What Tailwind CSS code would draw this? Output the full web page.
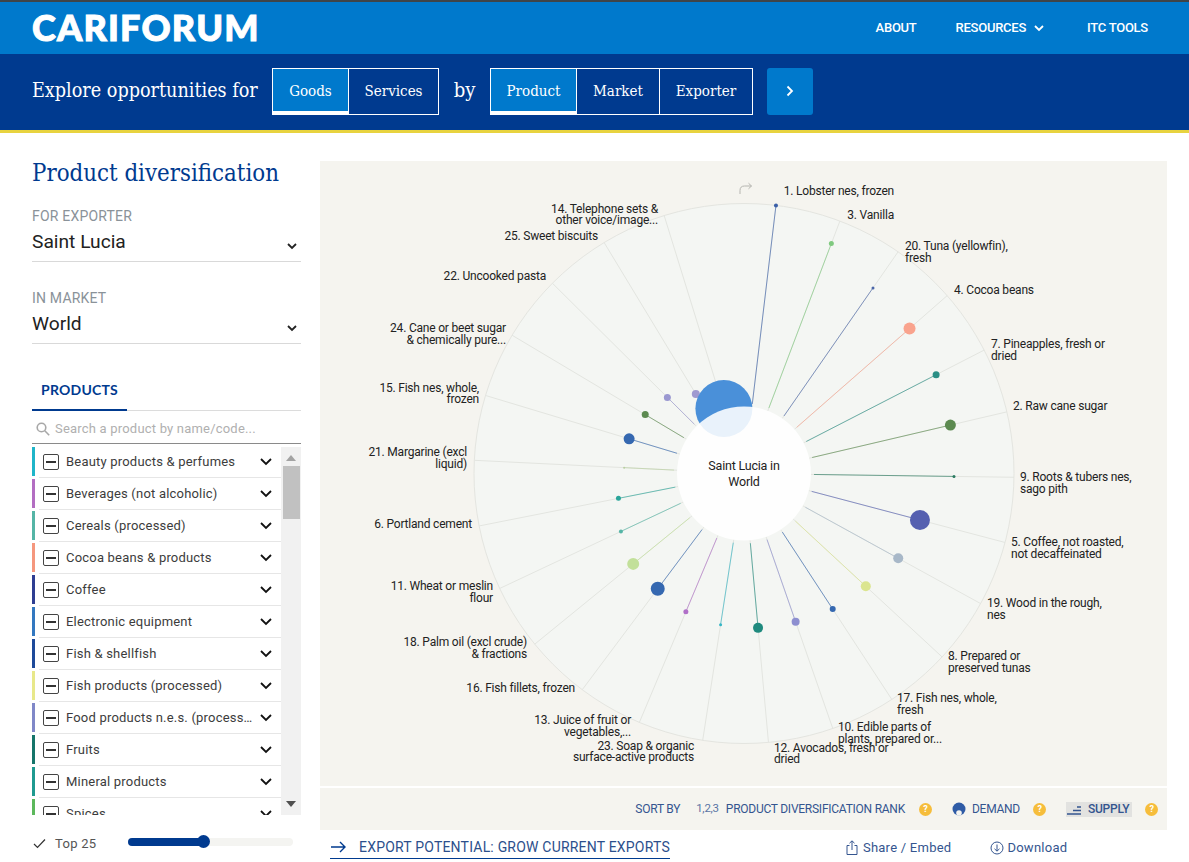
<!DOCTYPE html>
<html lang="en">
  <head>
    <meta charset="UTF-8" />
    <title>CARIFORUM - Product diversification</title>
    <script src="https://cdn.jsdelivr.net/npm/@tailwindcss/browser@4"></script>
  </head>
  <body class="h-[862px] overflow-hidden bg-white font-['Roboto',sans-serif] text-[#333]">
    <!-- top bar -->
    <header class="h-[54px] border-t-2 border-[#3f4448] bg-[#0079cc] flex items-center justify-between pl-8 pr-[41px]">
      <div class="font-['Lato',sans-serif] font-black text-[36px] leading-none text-white tracking-[1.2px] [-webkit-text-stroke:1px_white] -mt-[2px]">CARIFORUM</div>
      <nav class="flex items-center text-[13px] text-white font-medium tracking-[-0.25px]">
        <a class="mr-[39px]">ABOUT</a>
        <a class="flex items-center gap-2 mr-[43px]">RESOURCES
          <svg class="w-[10px] h-[7px]" viewBox="0 0 10 7" fill="none" stroke="white" stroke-width="1.8"><path d="M1 1l4 4 4-4" /></svg>
        </a>
        <a>ITC TOOLS</a>
      </nav>
    </header>

    <!-- explore bar -->
    <div class="h-[76px] bg-[#003a8f] flex items-center pb-[2px] pl-8 text-white font-['DejaVu_Serif_Condensed','DejaVu_Serif',serif]">
      <span class="text-[19.6px] w-[240px]">Explore opportunities for</span>
      <div class="flex h-[47px] border border-white text-[15px]">
        <button class="w-[75px] pt-[3px] bg-[#0079cc] border-b-[3px] border-white">Goods</button>
        <button class="w-[90px] border-l border-white">Services</button>
      </div>
      <span class="text-[20px] w-[51px] text-center -mt-[2px]">by</span>
      <div class="flex h-[47px] border border-white text-[15px]">
        <button class="w-[85px] pt-[3px] bg-[#0079cc] border-b-[3px] border-white">Product</button>
        <button class="w-[83px] border-l border-white">Market</button>
        <button class="w-[93px] border-l border-white">Exporter</button>
      </div>
      <button class="ml-[14px] w-[46px] h-[47px] bg-[#0079cc] rounded-[3px] flex items-center justify-center">
        <svg class="w-[8px] h-[12px]" viewBox="0 0 8 12" fill="none" stroke="white" stroke-width="1.8"><path d="M1.5 1.5l4.5 4.5-4.5 4.5" /></svg>
      </button>
    </div>
    <div class="h-[3px] bg-[#e8d33f]"></div>

    <div class="flex">
      <!-- sidebar -->
      <aside class="w-[269px] ml-8 shrink-0">
        <h1 class="mt-[24px] text-[23.800px] leading-[32px] text-[#003a8f] font-['DejaVu_Serif_Condensed','DejaVu_Serif',serif]">Product diversification</h1>

        <div class="mt-[19px] text-[14px] leading-[16px] tracking-[0.2px] text-[#8a9299]">FOR EXPORTER</div>
        <div class="mt-[3px] h-[35px] border-b border-[#d9d9d9] flex justify-between items-start text-[19.2px] leading-[30px] text-[#222]">
          Saint Lucia
          <svg class="w-[10px] h-[7px] mt-[16px] mr-[4px]" viewBox="0 0 10 7" fill="none" stroke="#222" stroke-width="1.8"><path d="M1 1l4 4 4-4" /></svg>
        </div>
        <div class="mt-[28px] text-[14px] leading-[16px] tracking-[0.2px] text-[#8a9299]">IN MARKET</div>
        <div class="mt-[3px] h-[35px] border-b border-[#d9d9d9] flex justify-between items-start text-[19.2px] leading-[30px] text-[#222]">
          World
          <svg class="w-[10px] h-[7px] mt-[16px] mr-[4px]" viewBox="0 0 10 7" fill="none" stroke="#222" stroke-width="1.8"><path d="M1 1l4 4 4-4" /></svg>
        </div>

        <div class="mt-[29px] h-[38px] border-b border-[#dcdcdc]">
          <div class="w-[95px] h-[38px] border-b-[2px] border-[#003a8f] text-center text-[14px] leading-[34px] font-bold font-['Lato',sans-serif] tracking-[0.2px] text-[#003a8f]">PRODUCTS</div>
        </div>
        <div class="h-[33px] pt-[4px] border-b border-[#8a8a8a] flex items-center pl-[4px] gap-[5px] text-[13px] text-[#b0b0b0] tracking-[0.2px]">
          <svg class="w-[14px] h-[14px]" viewBox="0 0 14 14" fill="none" stroke="#a8a8a8" stroke-width="1.6"><circle cx="5.5" cy="5.5" r="4.3" /><path d="M8.8 8.8l4.4 4.4" /></svg>
          Search a product by name/code...
        </div>

        <!-- product list -->
        <div class="relative mt-[3px] h-[368px] overflow-hidden">
          <div class="w-[249px] text-[13px] text-[#3c3c3c] tracking-[0.2px]">
            <div class="flex h-[32px]"><i class="w-[3px] h-[29px] shrink-0 bg-[#1fb5c9]"></i><div class="ml-[4px] flex-1 min-w-0 flex items-center border-b border-[#e6e6e6] pl-[4px] pr-[9px] h-[31px]"><span class="shrink-0 w-[16px] h-[16px] border border-[#444] rounded-[2px] flex items-center justify-center mr-[7px]"><b class="w-[10px] h-[2px] bg-[#333]"></b></span><span class="flex-1 min-w-0 truncate">Beauty products &amp; perfumes</span><svg class="shrink-0 w-[12px] h-[8px] ml-[5px]" viewBox="0 0 12 8" fill="none" stroke="#111" stroke-width="1.8"><path d="M1 1l5 5 5-5" /></svg></div></div>
            <div class="flex h-[32px]"><i class="w-[3px] h-[29px] shrink-0 bg-[#b36ec2]"></i><div class="ml-[4px] flex-1 min-w-0 flex items-center border-b border-[#e6e6e6] pl-[4px] pr-[9px] h-[31px]"><span class="shrink-0 w-[16px] h-[16px] border border-[#444] rounded-[2px] flex items-center justify-center mr-[7px]"><b class="w-[10px] h-[2px] bg-[#333]"></b></span><span class="flex-1 min-w-0 truncate">Beverages (not alcoholic)</span><svg class="shrink-0 w-[12px] h-[8px] ml-[5px]" viewBox="0 0 12 8" fill="none" stroke="#111" stroke-width="1.8"><path d="M1 1l5 5 5-5" /></svg></div></div>
            <div class="flex h-[32px]"><i class="w-[3px] h-[29px] shrink-0 bg-[#55b5a6]"></i><div class="ml-[4px] flex-1 min-w-0 flex items-center border-b border-[#e6e6e6] pl-[4px] pr-[9px] h-[31px]"><span class="shrink-0 w-[16px] h-[16px] border border-[#444] rounded-[2px] flex items-center justify-center mr-[7px]"><b class="w-[10px] h-[2px] bg-[#333]"></b></span><span class="flex-1 min-w-0 truncate">Cereals (processed)</span><svg class="shrink-0 w-[12px] h-[8px] ml-[5px]" viewBox="0 0 12 8" fill="none" stroke="#111" stroke-width="1.8"><path d="M1 1l5 5 5-5" /></svg></div></div>
            <div class="flex h-[32px]"><i class="w-[3px] h-[29px] shrink-0 bg-[#f5977e]"></i><div class="ml-[4px] flex-1 min-w-0 flex items-center border-b border-[#e6e6e6] pl-[4px] pr-[9px] h-[31px]"><span class="shrink-0 w-[16px] h-[16px] border border-[#444] rounded-[2px] flex items-center justify-center mr-[7px]"><b class="w-[10px] h-[2px] bg-[#333]"></b></span><span class="flex-1 min-w-0 truncate">Cocoa beans &amp; products</span><svg class="shrink-0 w-[12px] h-[8px] ml-[5px]" viewBox="0 0 12 8" fill="none" stroke="#111" stroke-width="1.8"><path d="M1 1l5 5 5-5" /></svg></div></div>
            <div class="flex h-[32px]"><i class="w-[3px] h-[29px] shrink-0 bg-[#2f3e92]"></i><div class="ml-[4px] flex-1 min-w-0 flex items-center border-b border-[#e6e6e6] pl-[4px] pr-[9px] h-[31px]"><span class="shrink-0 w-[16px] h-[16px] border border-[#444] rounded-[2px] flex items-center justify-center mr-[7px]"><b class="w-[10px] h-[2px] bg-[#333]"></b></span><span class="flex-1 min-w-0 truncate">Coffee</span><svg class="shrink-0 w-[12px] h-[8px] ml-[5px]" viewBox="0 0 12 8" fill="none" stroke="#111" stroke-width="1.8"><path d="M1 1l5 5 5-5" /></svg></div></div>
            <div class="flex h-[32px]"><i class="w-[3px] h-[29px] shrink-0 bg-[#3378c0]"></i><div class="ml-[4px] flex-1 min-w-0 flex items-center border-b border-[#e6e6e6] pl-[4px] pr-[9px] h-[31px]"><span class="shrink-0 w-[16px] h-[16px] border border-[#444] rounded-[2px] flex items-center justify-center mr-[7px]"><b class="w-[10px] h-[2px] bg-[#333]"></b></span><span class="flex-1 min-w-0 truncate">Electronic equipment</span><svg class="shrink-0 w-[12px] h-[8px] ml-[5px]" viewBox="0 0 12 8" fill="none" stroke="#111" stroke-width="1.8"><path d="M1 1l5 5 5-5" /></svg></div></div>
            <div class="flex h-[32px]"><i class="w-[3px] h-[29px] shrink-0 bg-[#1e4a9a]"></i><div class="ml-[4px] flex-1 min-w-0 flex items-center border-b border-[#e6e6e6] pl-[4px] pr-[9px] h-[31px]"><span class="shrink-0 w-[16px] h-[16px] border border-[#444] rounded-[2px] flex items-center justify-center mr-[7px]"><b class="w-[10px] h-[2px] bg-[#333]"></b></span><span class="flex-1 min-w-0 truncate">Fish &amp; shellfish</span><svg class="shrink-0 w-[12px] h-[8px] ml-[5px]" viewBox="0 0 12 8" fill="none" stroke="#111" stroke-width="1.8"><path d="M1 1l5 5 5-5" /></svg></div></div>
            <div class="flex h-[32px]"><i class="w-[3px] h-[29px] shrink-0 bg-[#e8e88a]"></i><div class="ml-[4px] flex-1 min-w-0 flex items-center border-b border-[#e6e6e6] pl-[4px] pr-[9px] h-[31px]"><span class="shrink-0 w-[16px] h-[16px] border border-[#444] rounded-[2px] flex items-center justify-center mr-[7px]"><b class="w-[10px] h-[2px] bg-[#333]"></b></span><span class="flex-1 min-w-0 truncate">Fish products (processed)</span><svg class="shrink-0 w-[12px] h-[8px] ml-[5px]" viewBox="0 0 12 8" fill="none" stroke="#111" stroke-width="1.8"><path d="M1 1l5 5 5-5" /></svg></div></div>
            <div class="flex h-[32px]"><i class="w-[3px] h-[29px] shrink-0 bg-[#8088c8]"></i><div class="ml-[4px] flex-1 min-w-0 flex items-center border-b border-[#e6e6e6] pl-[4px] pr-[9px] h-[31px]"><span class="shrink-0 w-[16px] h-[16px] border border-[#444] rounded-[2px] flex items-center justify-center mr-[7px]"><b class="w-[10px] h-[2px] bg-[#333]"></b></span><span class="flex-1 min-w-0 truncate">Food products n.e.s. (processed)</span><svg class="shrink-0 w-[12px] h-[8px] ml-[5px]" viewBox="0 0 12 8" fill="none" stroke="#111" stroke-width="1.8"><path d="M1 1l5 5 5-5" /></svg></div></div>
            <div class="flex h-[32px]"><i class="w-[3px] h-[29px] shrink-0 bg-[#16756a]"></i><div class="ml-[4px] flex-1 min-w-0 flex items-center border-b border-[#e6e6e6] pl-[4px] pr-[9px] h-[31px]"><span class="shrink-0 w-[16px] h-[16px] border border-[#444] rounded-[2px] flex items-center justify-center mr-[7px]"><b class="w-[10px] h-[2px] bg-[#333]"></b></span><span class="flex-1 min-w-0 truncate">Fruits</span><svg class="shrink-0 w-[12px] h-[8px] ml-[5px]" viewBox="0 0 12 8" fill="none" stroke="#111" stroke-width="1.8"><path d="M1 1l5 5 5-5" /></svg></div></div>
            <div class="flex h-[32px]"><i class="w-[3px] h-[29px] shrink-0 bg-[#1f9a90]"></i><div class="ml-[4px] flex-1 min-w-0 flex items-center border-b border-[#e6e6e6] pl-[4px] pr-[9px] h-[31px]"><span class="shrink-0 w-[16px] h-[16px] border border-[#444] rounded-[2px] flex items-center justify-center mr-[7px]"><b class="w-[10px] h-[2px] bg-[#333]"></b></span><span class="flex-1 min-w-0 truncate">Mineral products</span><svg class="shrink-0 w-[12px] h-[8px] ml-[5px]" viewBox="0 0 12 8" fill="none" stroke="#111" stroke-width="1.8"><path d="M1 1l5 5 5-5" /></svg></div></div>
            <div class="flex h-[32px]"><i class="w-[3px] h-[29px] shrink-0 bg-[#5cb85c]"></i><div class="ml-[4px] flex-1 min-w-0 flex items-center border-b border-[#e6e6e6] pl-[4px] pr-[9px] h-[31px]"><span class="shrink-0 w-[16px] h-[16px] border border-[#444] rounded-[2px] flex items-center justify-center mr-[7px]"><b class="w-[10px] h-[2px] bg-[#333]"></b></span><span class="flex-1 min-w-0 truncate">Spices</span><svg class="shrink-0 w-[12px] h-[8px] ml-[5px]" viewBox="0 0 12 8" fill="none" stroke="#111" stroke-width="1.8"><path d="M1 1l5 5 5-5" /></svg></div></div>
          </div>
          <!-- scrollbar -->
          <div class="absolute right-0 top-0 bottom-0 w-[20px] bg-[#f1f1f1]">
            <svg class="absolute left-[5px] top-[8px] w-[10px] h-[6px]" viewBox="0 0 10 6"><path d="M5 0l5 6H0z" fill="#a3a3a3" /></svg>
            <div class="absolute left-[2px] right-[1px] top-[19px] h-[53px] bg-[#c1c1c1]"></div>
            <svg class="absolute left-[5px] bottom-[8px] w-[10px] h-[6px]" viewBox="0 0 10 6"><path d="M0 0h10L5 6z" fill="#505050" /></svg>
          </div>
        </div>

        <!-- top 25 slider -->
        <div class="mt-[19px] flex items-center text-[13px] tracking-[0.3px] text-[#555]">
          <svg class="w-[13px] h-[11px] ml-[1px] mr-[9px]" viewBox="0 0 13 11" fill="none" stroke="#333" stroke-width="1.2"><path d="M1 6l3.5 3.5L12 1.5" /></svg>
          <span class="w-[73px]">Top 25</span>
          <div class="relative w-[165px] h-[8px] rounded-full bg-[#f4f4f1] -mt-[3px]">
            <div class="w-[75px] h-[8px] rounded-full bg-[#003a8f]"></div>
            <div class="absolute left-[69px] -top-[3px] w-[13px] h-[13px] rounded-full bg-[#003a8f]"></div>
          </div>
        </div>
      </aside>

      <!-- main column -->
      <main class="ml-[19px] w-[847px] mt-[28px]">
        <svg id="chart" class="block w-[847px] h-[625px] bg-[#f5f4ef]" viewBox="320 161 847 625" font-family="Roboto, sans-serif" font-size="12" fill="#222" letter-spacing="-0.2">
          <path d="M740 194v-3.500q0-4.500 4.500-4.500h7m-3-2.800l3 2.800-3 2.800" fill="none" stroke="#b5b5b0" stroke-width="1" />
        </svg>

        <div class="mt-[2px] h-[42px] bg-[#f5f4ef] flex items-center justify-end text-[12px] text-[#34558f] pr-[9px] tracking-[-0.25px]">
          <span class="mr-[16px]">SORT BY</span>
          <span class="mr-[7px] text-[11.5px] text-[#5a75a5]">1,2,3</span>
          <span>PRODUCT DIVERSIFICATION RANK</span>
          <span class="ml-[14px] w-[13px] h-[13px] rounded-full bg-[#f6bd3b] text-white text-[9px] font-bold leading-[13px] text-center">?</span>
          <svg class="ml-[20px] mr-[6px] w-[14px] h-[14px]" viewBox="0 0 14 14"><circle cx="7" cy="7" r="6.500" fill="#2f5ba5" /><circle cx="7" cy="11" r="2.800" fill="#f5f4ef" /></svg>
          <span>DEMAND</span>
          <span class="ml-[13px] w-[13px] h-[13px] rounded-full bg-[#f6bd3b] text-white text-[9px] font-bold leading-[13px] text-center">?</span>
          <span class="ml-[20px] h-[15px] w-[66px] bg-[#e2e2e0] flex items-center pl-[1px] font-medium">
            <svg class="w-[14px] h-[11px] mr-[7px]" viewBox="0 0 14 11" fill="none" stroke="#34558f" stroke-width="1.300"><path d="M0 10h14M6 6.500h8M10 3h4" /></svg>
            SUPPLY
          </span>
          <span class="ml-[13px] w-[13px] h-[13px] rounded-full bg-[#f6bd3b] text-white text-[9px] font-bold leading-[13px] text-center">?</span>
        </div>

        <div class="flex items-start h-[32px] text-[14px] text-[#34558f]">
          <a class="ml-[10px] h-[29px] pt-[6px] border-b border-[#003a8f] flex items-center gap-[13px] tracking-[0.2px] text-[#2c4f8c]">
            <svg class="w-[16px] h-[12px]" viewBox="0 0 16 12" fill="none" stroke="#003a8f" stroke-width="1.400"><path d="M1 6h14M10 1l5 5-5 5" /></svg>
            EXPORT POTENTIAL: GROW CURRENT EXPORTS
          </a>
          <a class="ml-[176px] mt-[8px] flex items-center gap-[5px] text-[13px] tracking-[0.25px]">
            <svg class="w-[12px] h-[15px]" viewBox="0 0 12 15" fill="none" stroke="#34558f" stroke-width="1"><path d="M3.500 5.500H1v9h10v-9H8.500M6 10V1M3.500 3.200L6 .8l2.500 2.400" /></svg>
            Share / Embed
          </a>
          <a class="ml-[39px] mt-[8px] flex items-center gap-[3px] text-[13px] tracking-[0.25px]">
            <svg class="w-[14px] h-[14px]" viewBox="0 0 14 14" fill="none" stroke="#34558f" stroke-width="1"><circle cx="7" cy="7" r="6" /><path d="M7 3.500v6.500M4.500 7.800L7 10.200l2.500-2.400" /></svg>
            Download
          </a>
        </div>
      </main>
    </div>

    <script>
      // radial chart, coordinates are page pixels (viewBox follows the page)
      const NS = "http://www.w3.org/2000/svg";
      const chart = document.getElementById("chart");
      const cx = 744, cy = 473.5, inner = 67, outer = 270;

      function add(name, attrs) {
        const el = document.createElementNS(NS, name);
        for (const k in attrs) el.setAttribute(k, attrs[k]);
        chart.appendChild(el);
        return el;
      }

      // dist = dot distance from centre, clockwise from the top
      const spokes = [
        [270, 2, "#3a5fa8"], [246, 2.5, "#7fc97f"], [226, 1.5, "#4a66a8"], [220, 6, "#f9a38d"],
        [216, 3.500, "#2a8f85"], [212, 5.500, "#5c8a50"], [210, 1.500, "#2a7a60"], [182, 10, "#5560b0"],
        [176, 5, "#a8b8c8"], [166, 5, "#dbe58f"], [162, 3, "#3568b0"], [157, 4, "#8d8fd0"],
        [155, 5, "#1f8a7e"], [153, 1.500, "#35b5c5"], [150, 2.500, "#b070c8"], [144, 7, "#3568b0"],
        [143, 6, "#c2e09a"], [136, 2, "#55b5a6"], [128, 2.500, "#2aa59a"], [120, 1, "#b8cfa0"],
        [120, 5.500, "#3568b0"], [115, 3.500, "#5c8a50"], [108, 3.500, "#9a98d0"], [93, 4, "#a09ad0"],
        [68, 28.500, "#4a90d9"]
      ];

      add("circle", { cx, cy, r: outer, fill: "#f4f6f3", stroke: "#e4e5e0" });
      spokes.forEach(([dist, r, colour], i) => {
        const a = (6.8 + 14 * i) * Math.PI / 180;
        const s = Math.sin(a), c = Math.cos(a);
        add("line", { x1: cx + s * inner, y1: cy - c * inner, x2: cx + s * outer, y2: cy - c * outer, stroke: "#e3e5e0" });
        add("line", { x1: cx + s * (inner + 3), y1: cy - c * (inner + 3), x2: cx + s * dist, y2: cy - c * dist, stroke: colour, "stroke-opacity": 0.65 });
      });
      spokes.forEach(([dist, r, colour], i) => {
        const a = (6.8 + 14 * i) * Math.PI / 180;
        add("circle", { cx: cx + Math.sin(a) * dist, cy: cy - Math.cos(a) * dist, r, fill: colour });
      });
      // hub covers the spokes, the big bubble still shows through it a little
      add("circle", { cx, cy, r: inner, fill: "#fff", "fill-opacity": 0.88 });

      // [lines, x, y of first baseline, anchor, line height]
      const labels = [
        [["1. Lobster nes, frozen"], 894, 195, "end"],
        [["3. Vanilla"], 894, 219, "end"],
        [["20. Tuna (yellowfin),", "fresh"], 905, 250, "start"],
        [["4. Cocoa beans"], 954, 294, "start"],
        [["7. Pineapples, fresh or", "dried"], 991, 348, "start"],
        [["2. Raw cane sugar"], 1013, 410, "start"],
        [["9. Roots & tubers nes,", "sago pith"], 1020, 481, "start"],
        [["5. Coffee, not roasted,", "not decaffeinated"], 1011, 546, "start"],
        [["19. Wood in the rough,", "nes"], 987, 607, "start"],
        [["8. Prepared or", "preserved tunas"], 948, 660, "start"],
        [["17. Fish nes, whole,", "fresh"], 897, 702, "start"],
        [["10. Edible parts of", "plants, prepared or..."], 838, 731, "start"],
        [["12. Avocados, fresh or", "dried"], 774, 752, "start", 11],
        [["23. Soap & organic", "surface-active products"], 694, 750, "end", 11],
        [["13. Juice of fruit or", "vegetables,..."], 631, 724, "end"],
        [["16. Fish fillets, frozen"], 575, 692, "end"],
        [["18. Palm oil (excl crude)", "& fractions"], 527, 646, "end"],
        [["11. Wheat or meslin", "flour"], 493, 590, "end"],
        [["6. Portland cement"], 472, 528, "end"],
        [["21. Margarine (excl", "liquid)"], 467, 456, "end"],
        [["15. Fish nes, whole,", "frozen"], 479, 392, "end", 11],
        [["24. Cane or beet sugar", "& chemically pure..."], 506, 332, "end"],
        [["22. Uncooked pasta"], 546, 280, "end"],
        [["25. Sweet biscuits"], 598, 240, "end"],
        [["14. Telephone sets &", "other voice/image..."], 658, 213, "end", 11]
      ];
      labels.forEach(([lines, x, y, anchor, lh]) => {
        lines.forEach((line, n) => {
          add("text", { x, y: y + n * (lh || 12), "text-anchor": anchor }).textContent = line;
        });
      });

      add("text", { x: cx, y: 470, "text-anchor": "middle", "font-size": 12.5 }).textContent = "Saint Lucia in";
      add("text", { x: cx, y: 486, "text-anchor": "middle", "font-size": 12.5 }).textContent = "World";
    </script>
  </body>
</html>
